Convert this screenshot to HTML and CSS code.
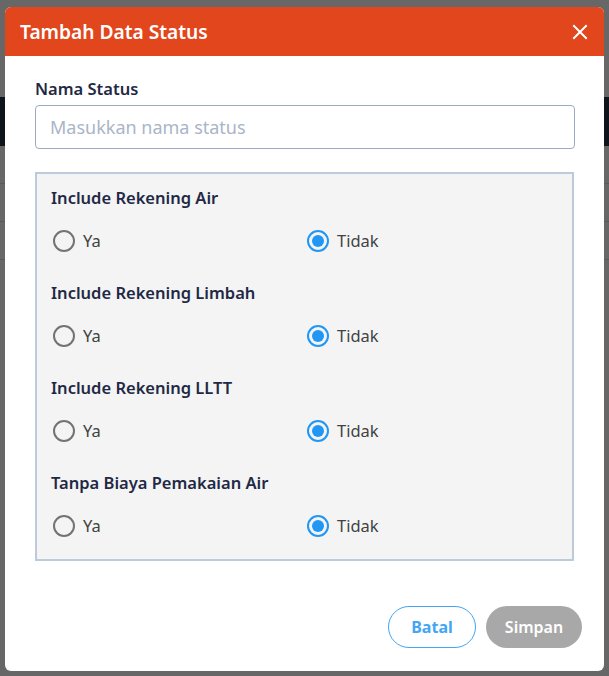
FILE: index.html
```html
<!DOCTYPE html>
<html lang="id">
<head>
<meta charset="utf-8">
<title>Tambah Data Status</title>
<link rel="stylesheet" href="styles.css">
</head>
<body>
<div class="page">
  <div class="page-top"></div>
  <div class="page-nav"></div>
  <div class="page-gap"></div>
  <div class="page-row"></div>
  <div class="page-row"></div>
  <div class="page-row"></div>
</div>

<div class="modal">
  <div class="modal-header">
    <h1 class="modal-title">Tambah Data Status</h1>
    <button class="close-btn" aria-label="Tutup">
      <svg width="16" height="16" viewBox="0 0 16 16"><path d="M2 2 L14 14 M14 2 L2 14" stroke="#fff" stroke-width="2" stroke-linecap="square" fill="none"/></svg>
    </button>
  </div>
  <div class="modal-body">
    <label class="field-label">Nama Status</label>
    <input class="text-input" type="text" placeholder="Masukkan nama status">

    <div class="options-box">
      <div class="group">
        <div class="group-title">Include Rekening Air</div>
        <div class="radio-row">
          <label class="radio"><span class="dot"></span><span class="radio-text">Ya</span></label>
          <label class="radio checked"><span class="dot"></span><span class="radio-text">Tidak</span></label>
        </div>
      </div>
      <div class="group">
        <div class="group-title">Include Rekening Limbah</div>
        <div class="radio-row">
          <label class="radio"><span class="dot"></span><span class="radio-text">Ya</span></label>
          <label class="radio checked"><span class="dot"></span><span class="radio-text">Tidak</span></label>
        </div>
      </div>
      <div class="group">
        <div class="group-title">Include Rekening LLTT</div>
        <div class="radio-row">
          <label class="radio"><span class="dot"></span><span class="radio-text">Ya</span></label>
          <label class="radio checked"><span class="dot"></span><span class="radio-text">Tidak</span></label>
        </div>
      </div>
      <div class="group">
        <div class="group-title">Tanpa Biaya Pemakaian Air</div>
        <div class="radio-row">
          <label class="radio"><span class="dot"></span><span class="radio-text">Ya</span></label>
          <label class="radio checked"><span class="dot"></span><span class="radio-text">Tidak</span></label>
        </div>
      </div>
    </div>
  </div>
  <div class="modal-footer">
    <button class="btn btn-outline">Batal</button>
    <button class="btn btn-disabled">Simpan</button>
  </div>
</div>
</body>
</html>
```
FILE: styles.css
```css
* { box-sizing: border-box; }
html, body {
  margin: 0;
  padding: 0;
  width: 609px;
  height: 676px;
  overflow: hidden;
  background: #676767;
  font-family: "Noto Sans", "Open Sans", sans-serif;
}
.page { display: flex; flex-direction: column; }
.page-top { height: 97px; }
.page-nav { height: 49px; background: #0f131c; }
.page-gap { height: 37px; }
.page-row { height: 38px; border-top: 1px solid #575a62; }

.modal {
  position: absolute;
  left: 5px;
  top: 7px;
  width: 599px;
  height: 664px;
  background: #fff;
  border-radius: 6px;
  overflow: hidden;
  display: flex;
  flex-direction: column;
}
.modal-header {
  height: 49px;
  background: #e2461c;
  display: flex;
  align-items: center;
  justify-content: space-between;
  padding: 0 16px 0 15px;
  flex-shrink: 0;
}
.modal-title {
  margin: 0;
  color: #fff;
  font-size: 19.2px;
  font-weight: 600;
  line-height: 24px;
}
.close-btn {
  background: none;
  border: 0;
  padding: 0;
  width: 16px;
  height: 16px;
  display: flex;
}
.modal-body {
  padding: 21px 29px 0 30px;
  display: flex;
  flex-direction: column;
  flex: 1;
}
.field-label {
  font-size: 16.5px;
  font-weight: 600;
  color: #1f2945;
  line-height: 24px;
  margin-bottom: 4px;
}
.text-input {
  height: 44px;
  width: 540px;
  border: 1px solid #9aaac3;
  border-radius: 4px;
  padding: 0 14px;
  font-family: inherit;
  font-size: 18px;
  color: #333;
  outline: none;
}
.text-input::placeholder { color: #a9b5c8; }

.options-box {
  margin-top: 23px;
  width: 539px;
  background: #f4f4f4;
  border: 2px solid #bccadc;
  padding: 12px 16px 21px 14px;
  display: flex;
  flex-direction: column;
  gap: 28px;
}
.group { display: flex; flex-direction: column; gap: 19px; }
.group-title {
  font-size: 16.5px;
  font-weight: 600;
  color: #1f2945;
  line-height: 24px;
}
.radio-row {
  display: grid;
  grid-template-columns: 254px 1fr;
  height: 24px;
}
.radio {
  display: flex;
  align-items: center;
  gap: 8px;
  padding-left: 2px;
}
.dot {
  width: 22px;
  height: 22px;
  border-radius: 50%;
  border: 2px solid #737373;
  position: relative;
  flex-shrink: 0;
}
.radio.checked .dot { border-color: #2196f3; }
.radio.checked .dot::after {
  content: "";
  position: absolute;
  left: 3px;
  top: 3px;
  width: 12px;
  height: 12px;
  border-radius: 50%;
  background: #2196f3;
}
.radio-text {
  font-size: 16.5px;
  color: #424242;
  line-height: 24px;
}

.modal-footer {
  display: flex;
  justify-content: flex-end;
  gap: 10px;
  padding: 0 22px 23px 0;
}
.btn {
  height: 42px;
  border-radius: 21px;
  font-family: inherit;
  font-size: 16px;
  font-weight: 700;
  padding: 0;
}
.btn-outline {
  width: 88px;
  background: #fff;
  border: 1.5px solid #42a5f5;
  color: #42a5f5;
}
.btn-disabled {
  width: 96px;
  background: #a8a8a8;
  border: 0;
  color: #fff;
  font-weight: 600;
}
```
